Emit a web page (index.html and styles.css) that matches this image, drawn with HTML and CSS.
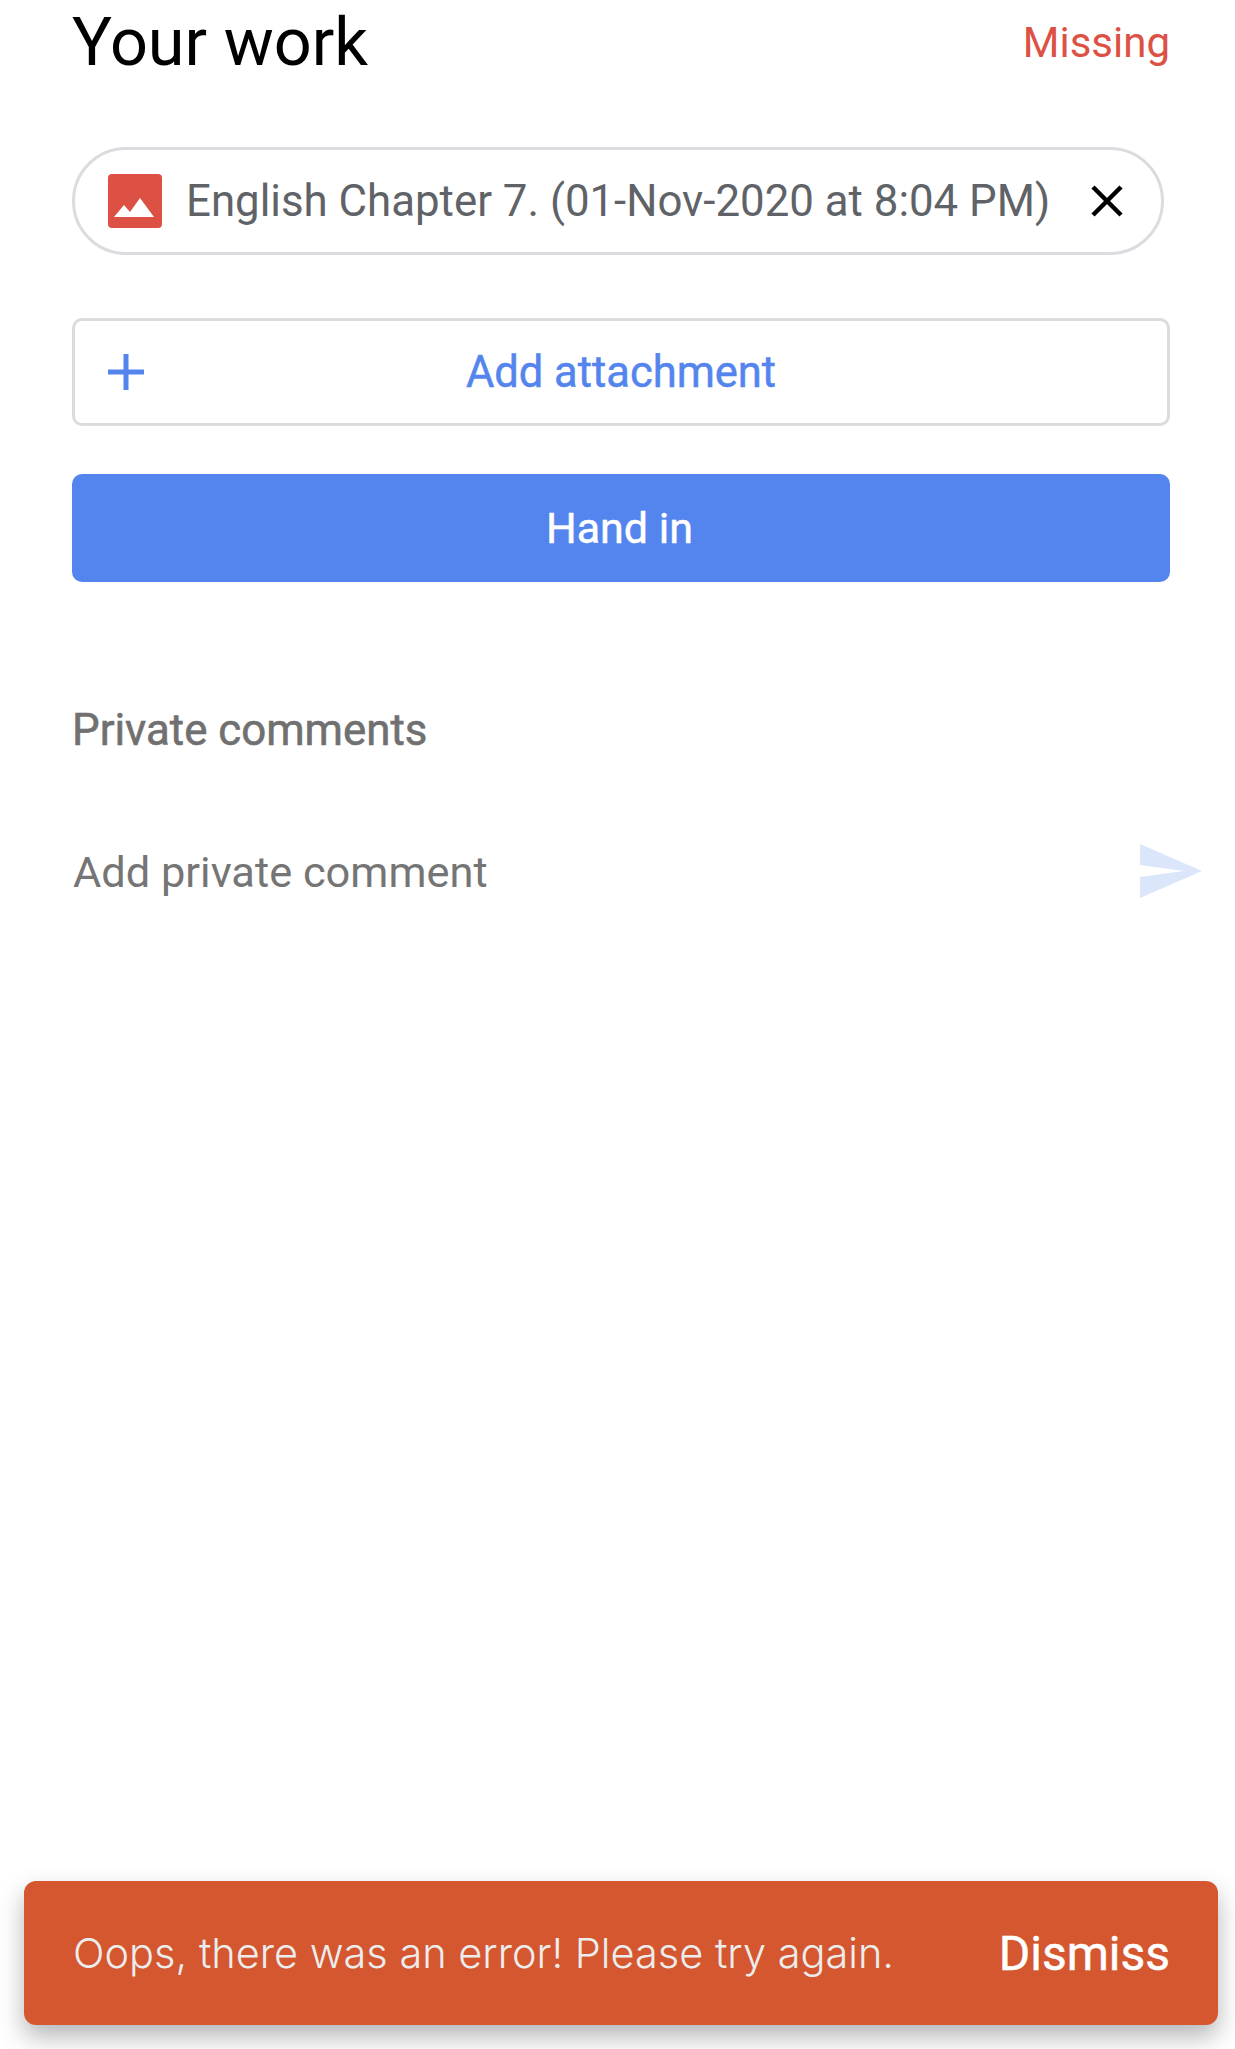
FILE: index.html
```html
<!DOCTYPE html>
<html lang="en">
<head>
<meta charset="utf-8">
<title>Your work</title>
<link rel="stylesheet" href="styles.css">
</head>
<body>
<main class="page">
  <header class="work-head">
    <h1 class="work-title">Your work</h1>
    <span class="work-status">Missing</span>
  </header>
  <div class="chip">
    <svg class="chip-icon" viewBox="0 0 54 54" aria-hidden="true">
      <rect width="54" height="54" rx="4" fill="#dd5144"/>
      <path d="M6 43 L16 31 L22 38 L32 24 L46 43 Z" fill="#fff"/>
    </svg>
    <span class="chip-name">English Chapter 7. (01-Nov-2020 at 8:04 PM)</span>
    <svg class="chip-close" viewBox="0 0 34 34" aria-hidden="true">
      <path d="M3 3 L31 31 M31 3 L3 31" stroke="#000" stroke-width="4.5" fill="none"/>
    </svg>
  </div>
  <button class="btn btn-outline" type="button">
    <svg class="btn-plus" viewBox="0 0 36 36" aria-hidden="true">
      <path d="M0 18 H36 M18 0 V36" stroke="#5484ed" stroke-width="5" fill="none"/>
    </svg>
    <span>Add attachment</span>
  </button>
  <button class="btn btn-solid" type="button">Hand in</button>
  <h2 class="comments-title">Private comments</h2>
  <div class="comment-row">
    <span class="comment-hint">Add private comment</span>
    <svg class="send" viewBox="0 0 62 54" aria-hidden="true">
      <path d="M0 0 L62 27 L0 54 V33 L44 27 L0 21 Z" fill="#dce6fb"/>
    </svg>
  </div>
  <div class="toast">
    <span class="toast-text">Oops, there was an error! Please try again.</span>
    <span class="toast-action">Dismiss</span>
  </div>
</main>
</body>
</html>
```
FILE: styles.css
```css
* { box-sizing: border-box; }
html, body { margin: 0; padding: 0; background: #fff; }
.page {
  height: 2049px;
  padding: 0 65px 0 72px;
  display: flex;
  flex-direction: column;
  font-family: Roboto, "Liberation Sans", sans-serif;
  overflow: hidden;
}
.work-head {
  height: 84px;
  display: flex;
  justify-content: space-between;
  align-items: flex-start;
}
.work-title {
  margin: 0;
  font-size: 66.6px;
  line-height: 84px;
  font-weight: 400;
  color: #000;
}
.work-status {
  font-size: 42px;
  line-height: 86px;
  color: #dd5144;
}
.chip {
  margin-top: 63px;
  width: 1092px;
  height: 108px;
  border: 3px solid #dadce0;
  border-radius: 54px;
  padding: 0 37px 0 33px;
  display: flex;
  align-items: center;
}
.chip-icon { width: 54px; height: 54px; flex: none; }
.chip-name {
  margin-left: 24px;
  font-size: 43.8px;
  color: #5f6368;
  white-space: nowrap;
  flex: 1;
}
.chip-close { width: 34px; height: 34px; flex: none; }
.btn {
  display: flex;
  align-items: center;
  justify-content: center;
  width: 100%;
  height: 108px;
  border-radius: 10px;
  font-family: inherit;
  font-size: 43.5px;
  font-weight: 400;
  -webkit-text-stroke: 0.5px currentColor;
  padding: 0;
}
.btn-outline {
  margin-top: 63px;
  position: relative;
  background: #fff;
  border: 3px solid #dadce0;
  color: #5484ed;
}
.btn-plus {
  position: absolute;
  left: 33px;
  top: 33px;
  width: 36px;
  height: 36px;
}
.btn-solid {
  margin-top: 48px;
  padding-right: 3px;
  background: #5484ed;
  border: 0;
  color: #fff;
  font-size: 43px;
}
.comments-title {
  margin: 121px 0 0;
  font-size: 43.8px;
  line-height: 54px;
  font-weight: 400;
  -webkit-text-stroke: 0.6px currentColor;
  color: #707070;
}
.comment-row {
  margin-top: 87px;
  margin-right: -32px;
  display: flex;
  justify-content: space-between;
  align-items: center;
}
.comment-hint {
  margin-left: 1px;
  font-size: 43.4px;
  color: #757575;
}
.send { width: 62px; height: 54px; flex: none; margin-bottom: 3px; }
.toast {
  margin: auto -48px 24px -48px;
  height: 144px;
  background: #d4572f;
  border-radius: 12px;
  box-shadow: 0 12px 24px rgba(60, 64, 67, 0.38);
  padding: 0 48px 0 49px;
  display: flex;
  justify-content: space-between;
  align-items: center;
  color: #fff;
}
.toast-text {
  font-family: Inter, sans-serif;
  font-size: 41.5px;
  font-weight: 300;
  color: #ececec;
}
.toast-action {
  font-size: 48px;
  font-weight: 400;
  -webkit-text-stroke: 0.5px currentColor;
}
```
